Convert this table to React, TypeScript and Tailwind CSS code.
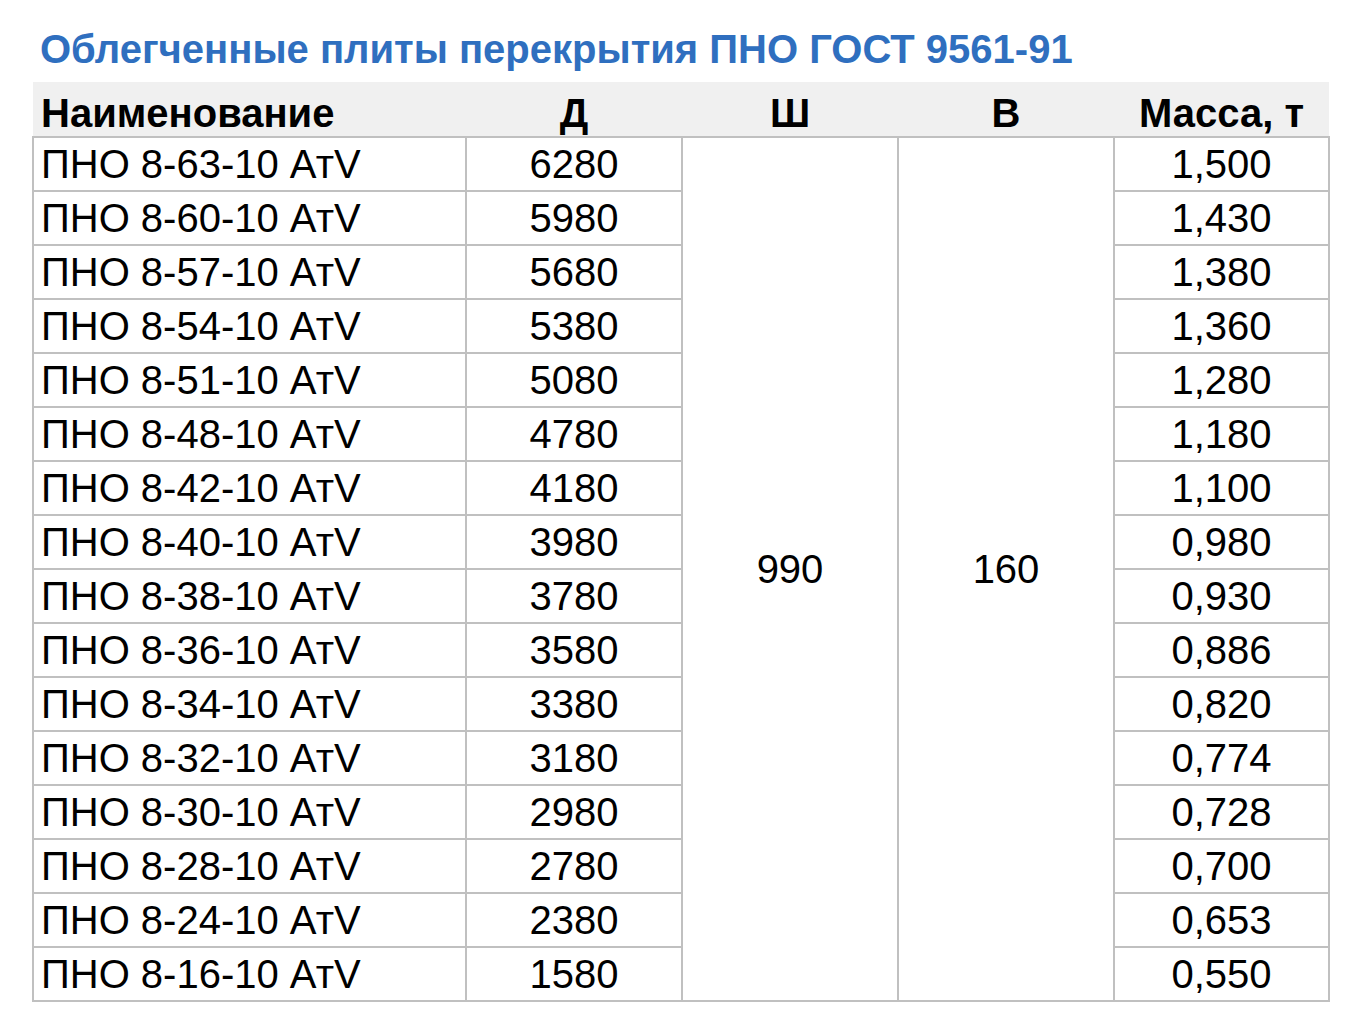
const rows: [string, string, string][] = [
  ['ПНО 8-63-10 АтV', '6280', '1,500'],
  ['ПНО 8-60-10 АтV', '5980', '1,430'],
  ['ПНО 8-57-10 АтV', '5680', '1,380'],
  ['ПНО 8-54-10 АтV', '5380', '1,360'],
  ['ПНО 8-51-10 АтV', '5080', '1,280'],
  ['ПНО 8-48-10 АтV', '4780', '1,180'],
  ['ПНО 8-42-10 АтV', '4180', '1,100'],
  ['ПНО 8-40-10 АтV', '3980', '0,980'],
  ['ПНО 8-38-10 АтV', '3780', '0,930'],
  ['ПНО 8-36-10 АтV', '3580', '0,886'],
  ['ПНО 8-34-10 АтV', '3380', '0,820'],
  ['ПНО 8-32-10 АтV', '3180', '0,774'],
  ['ПНО 8-30-10 АтV', '2980', '0,728'],
  ['ПНО 8-28-10 АтV', '2780', '0,700'],
  ['ПНО 8-24-10 АтV', '2380', '0,653'],
  ['ПНО 8-16-10 АтV', '1580', '0,550'],
];

// высота строки 52 + бордер 2 = шаг 54px как на скрине
const cell = 'border-2 border-[#c0c0c0] h-[52px] leading-[52px] p-0 align-middle';
const head = 'h-[54px] pt-[8px] leading-[46px] p-0 font-bold align-top';

export default function App() {
  return (
    <div className="bg-white min-h-[1032px] px-[32px] pt-[25px] font-['Liberation_Sans',Arial,sans-serif] text-black">
      <h1 className="pl-[8px] text-[40px] leading-[48px] font-bold text-[#2f6fbf] mb-[9px]">
        Облегченные плиты перекрытия ПНО ГОСТ 9561-91
      </h1>
      <table className="w-[1296px] table-fixed border-collapse text-[40px]">
        <colgroup>
          <col className="w-[433px]" />
          <col className="w-[216px]" />
          <col className="w-[216px]" />
          <col className="w-[216px]" />
          <col className="w-[215px]" />
        </colgroup>
        <thead>
          <tr className="bg-[#f0f0f0]">
            <th className={`${head} text-left pl-[8px]`}>Наименование</th>
            <th className={`${head} text-center`}>Д</th>
            <th className={`${head} text-center`}>Ш</th>
            <th className={`${head} text-center`}>В</th>
            <th className={`${head} text-center`}>Масса, т</th>
          </tr>
        </thead>
        <tbody>
          {rows.map(([name, len, mass], i) => (
            <tr key={name}>
              <td className={`${cell} pl-[7px] text-left`}>{name}</td>
              <td className={`${cell} text-center`}>{len}</td>
              {i === 0 && (
                <td rowSpan={16} className="border-2 border-[#c0c0c0] p-0 text-center align-middle">
                  990
                </td>
              )}
              {i === 0 && (
                <td rowSpan={16} className="border-2 border-[#c0c0c0] p-0 text-center align-middle">
                  160
                </td>
              )}
              <td className={`${cell} text-center`}>{mass}</td>
            </tr>
          ))}
        </tbody>
      </table>
    </div>
  );
}
